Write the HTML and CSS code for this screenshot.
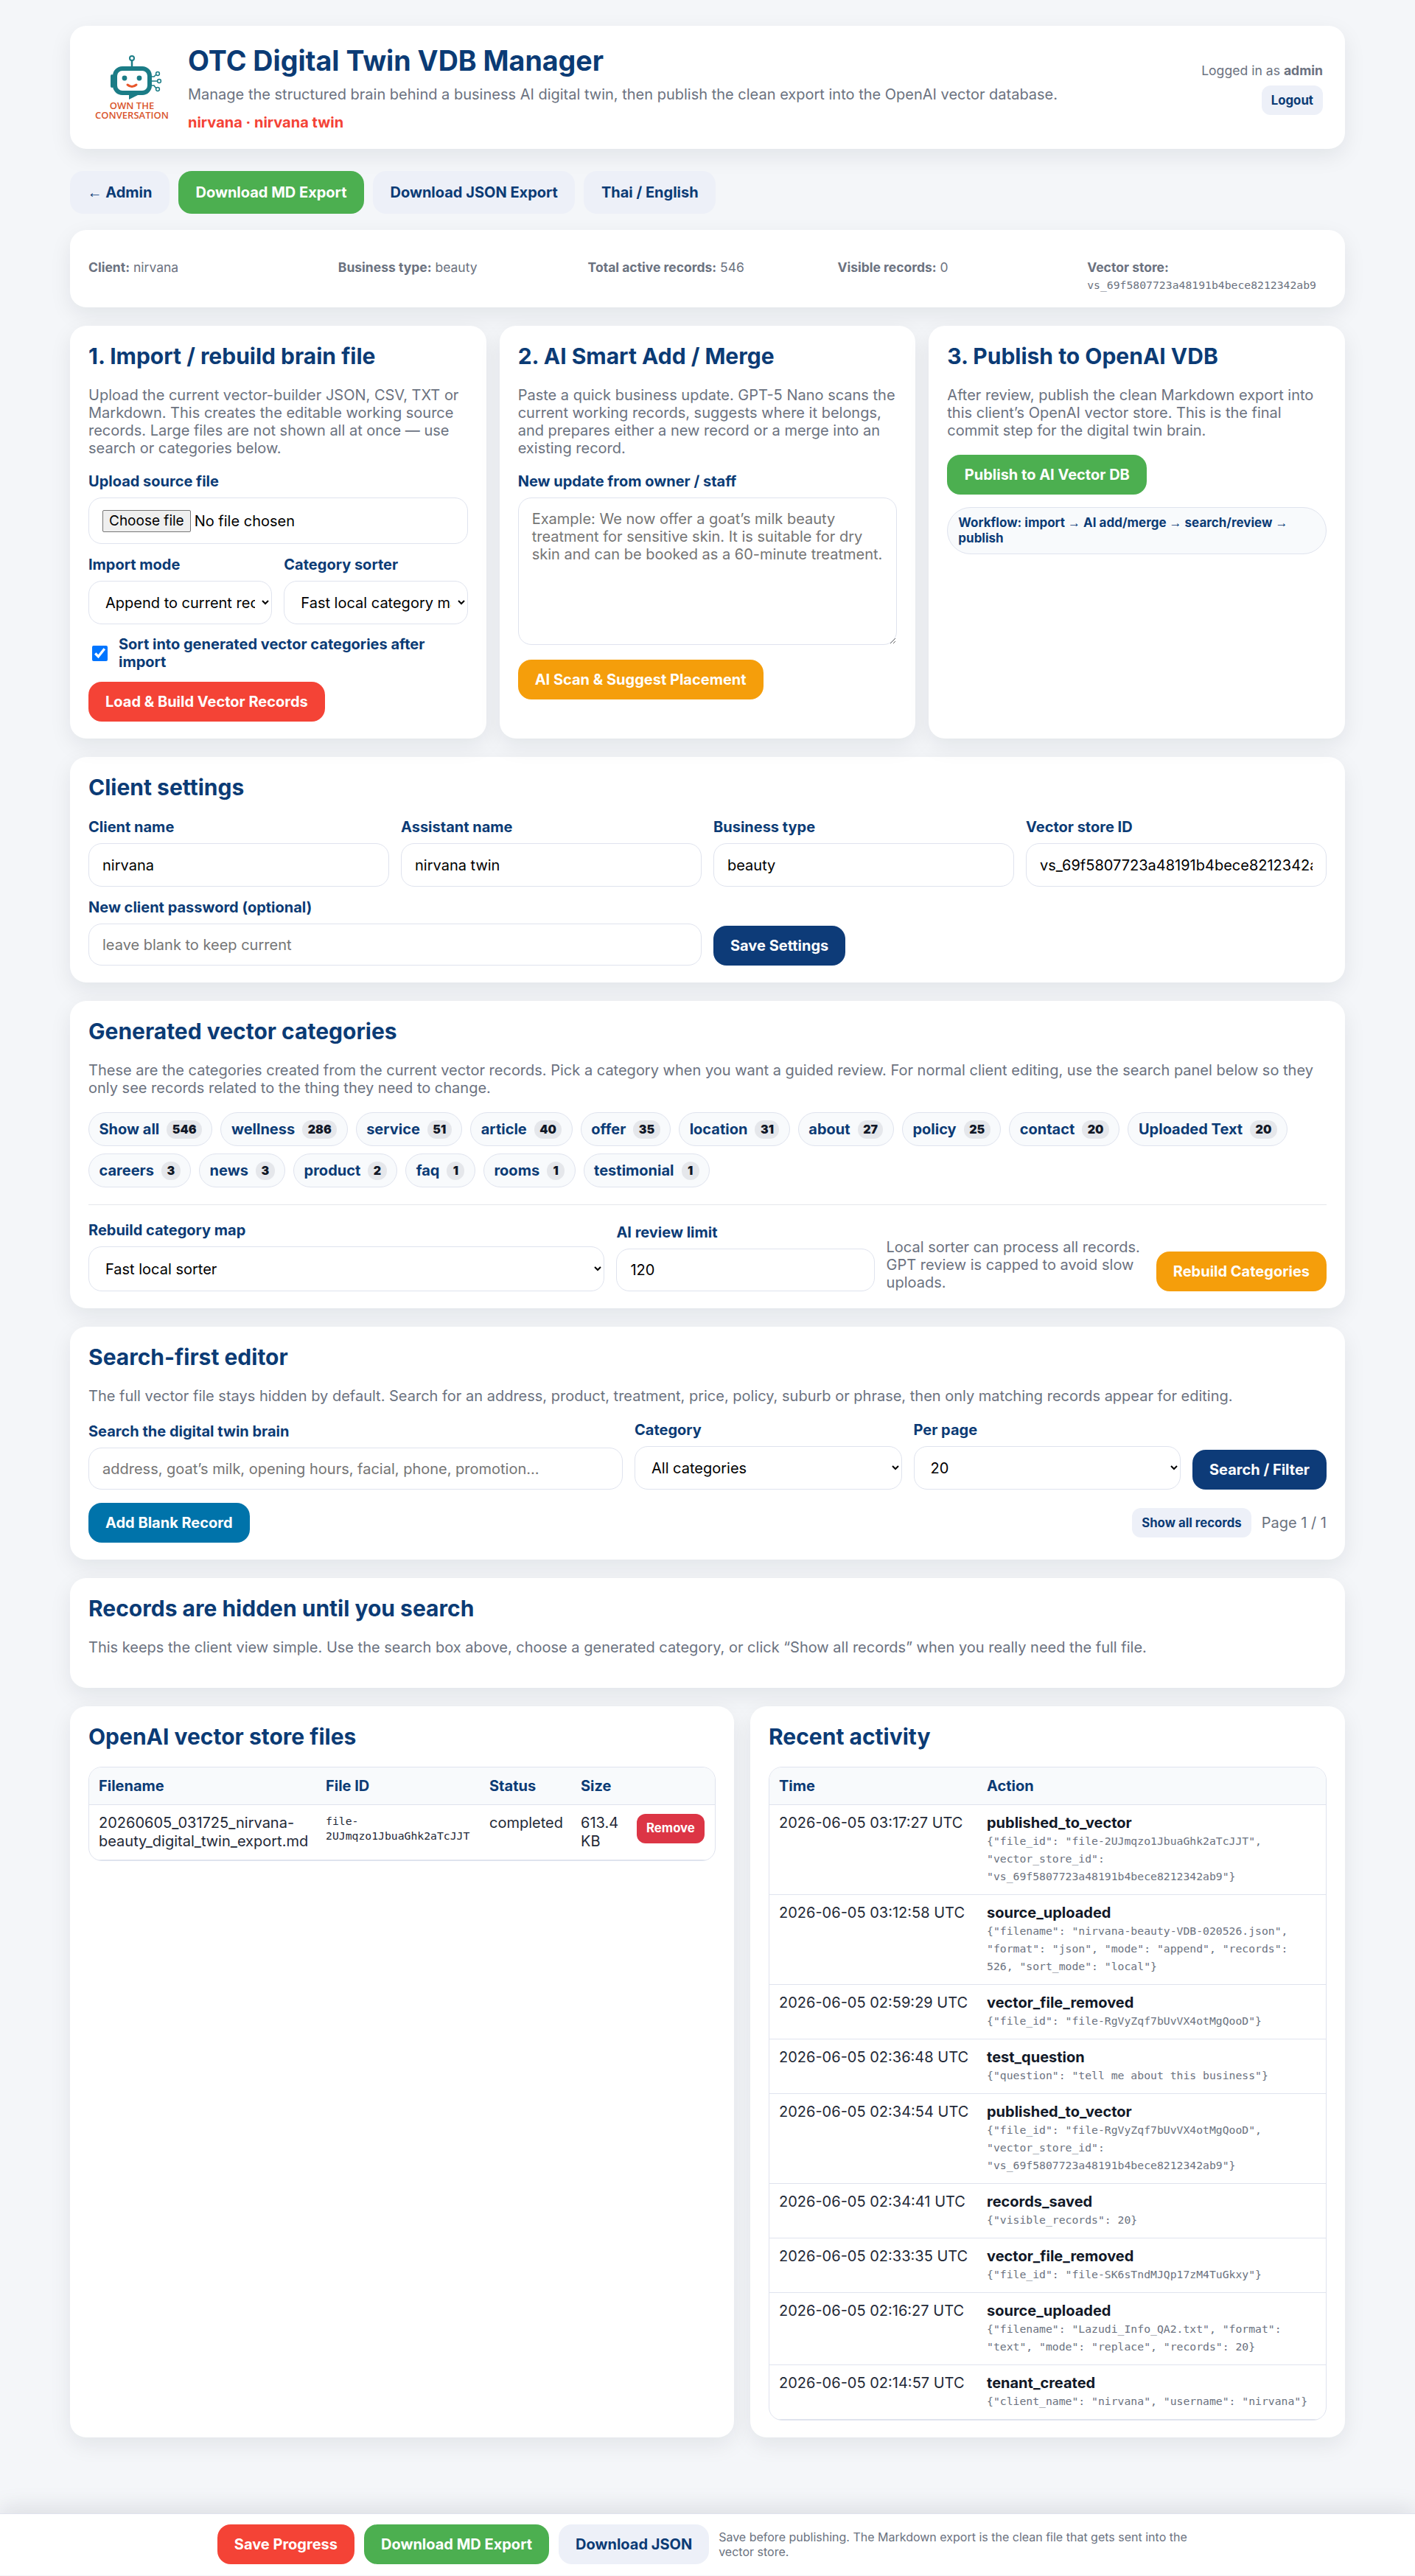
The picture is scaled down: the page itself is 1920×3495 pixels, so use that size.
FILE: index.html
```html
<!DOCTYPE html>
<html lang="en">
<head>
  <meta charset="UTF-8">
  <title>OTC Digital Twin VDB Manager</title>
  <link rel="stylesheet" href="styles.css">
</head>
<body>
  <main class="wrap">
    <header class="card hero">
      <svg class="logo" viewBox="0 0 110 107" aria-label="Own the Conversation">
        <circle cx="54" cy="13" r="3" fill="none" stroke="#1b7c86" stroke-width="2"/>
        <path d="M54 16v9" stroke="#1b7c86" stroke-width="2.5"/>
        <rect x="31" y="27" width="47" height="33" rx="10" fill="#fff" stroke="#1b7c86" stroke-width="6"/>
        <rect x="25" y="35" width="4" height="18" rx="2" fill="#1b7c86"/>
        <circle cx="44" cy="40" r="3.4" fill="#1b7c86"/>
        <circle cx="64" cy="40" r="3.4" fill="#1b7c86"/>
        <path d="M48 49q6 5 12 0" fill="none" stroke="#e8562a" stroke-width="3" stroke-linecap="round"/>
        <path d="M50 62h14l-14 7z" fill="#1b7c86"/>
        <path d="M81 38h3l3-3M81 44h8M81 50h3l3 4" fill="none" stroke="#1b7c86" stroke-width="1.600"/>
        <circle cx="89" cy="34" r="2.400" fill="#fff" stroke="#1b7c86" stroke-width="1.500"/>
        <circle cx="91" cy="44" r="2.400" fill="#fff" stroke="#1b7c86" stroke-width="1.500"/>
        <circle cx="89" cy="55" r="2.400" fill="#fff" stroke="#1b7c86" stroke-width="1.500"/>
        <text class="logo-text" x="54" y="82">OWN THE</text>
        <text class="logo-text" x="54" y="95">CONVERSATION</text>
      </svg>
      <div class="hero-text">
        <h1>OTC Digital Twin VDB Manager</h1>
        <p class="muted hero-sub">Manage the structured brain behind a business AI digital twin, then publish the clean export into the OpenAI vector database.</p>
        <div class="hero-client">nirvana · nirvana twin</div>
      </div>
      <div class="hero-user">
        <div class="muted">Logged in as <strong>admin</strong></div>
        <a class="btn btn-light btn-small">Logout</a>
      </div>
    </header>

    <nav class="toolbar">
      <a class="btn btn-light btn-tall"><span class="arrow">←</span>&nbsp;Admin</a>
      <a class="btn btn-green btn-tall">Download MD Export</a>
      <a class="btn btn-light btn-tall">Download JSON Export</a>
      <a class="btn btn-light btn-tall">Thai / English</a>
    </nav>

    <section class="card stats">
      <div><strong>Client:</strong> nirvana</div>
      <div><strong>Business type:</strong> beauty</div>
      <div><strong>Total active records:</strong> 546</div>
      <div><strong>Visible records:</strong> 0</div>
      <div><strong>Vector store:</strong><br><code>vs_69f5807723a48191b4bece8212342ab9</code></div>
    </section>

    <div class="steps">
      <section class="card">
        <h2>1. Import / rebuild brain file</h2>
        <p class="muted">Upload the current vector-builder JSON, CSV, TXT or Markdown. This creates the editable working source records. Large files are not shown all at once — use search or categories below.</p>
        <span class="label">Upload source file</span>
        <div class="control file-control">
          <button class="file-btn" type="button">Choose file</button>
          <span>No file chosen</span>
        </div>
        <div class="two-col">
          <div>
            <label class="label" for="importMode">Import mode</label>
            <select class="control" id="importMode">
              <option>Append to current records</option>
              <option>Replace current records</option>
            </select>
          </div>
          <div>
            <label class="label" for="sorter">Category sorter</label>
            <select class="control" id="sorter">
              <option>Fast local category map</option>
              <option>GPT review</option>
            </select>
          </div>
        </div>
        <label class="check-row">
          <input type="checkbox" checked>
          <span>Sort into generated vector categories after import</span>
        </label>
        <a class="btn btn-red">Load &amp; Build Vector Records</a>
      </section>

      <section class="card">
        <h2>2. AI Smart Add / Merge</h2>
        <p class="muted">Paste a quick business update. GPT-5 Nano scans the current working records, suggests where it belongs, and prepares either a new record or a merge into an existing record.</p>
        <label class="label" for="ownerUpdate">New update from owner / staff</label>
        <textarea class="control update-box" id="ownerUpdate" placeholder="Example: We now offer a goat’s milk beauty treatment for sensitive skin. It is suitable for dry skin and can be booked as a 60-minute treatment."></textarea>
        <a class="btn btn-orange">AI Scan &amp; Suggest Placement</a>
      </section>

      <section class="card">
        <h2>3. Publish to OpenAI VDB</h2>
        <p class="muted">After review, publish the clean Markdown export into this client’s OpenAI vector store. This is the final commit step for the digital twin brain.</p>
        <a class="btn btn-green publish-btn">Publish to AI Vector DB</a>
        <div class="workflow">Workflow: import <span class="arrow">→</span> AI add/merge <span class="arrow">→</span> search/review <span class="arrow">→</span> publish</div>
      </section>
    </div>

    <section class="card">
      <h2 class="title-tight">Client settings</h2>
      <div class="settings-grid">
        <div>
          <label class="label" for="clientName">Client name</label>
          <input class="control" id="clientName" value="nirvana">
        </div>
        <div>
          <label class="label" for="assistantName">Assistant name</label>
          <input class="control" id="assistantName" value="nirvana twin">
        </div>
        <div>
          <label class="label" for="businessType">Business type</label>
          <input class="control" id="businessType" value="beauty">
        </div>
        <div>
          <label class="label" for="vectorId">Vector store ID</label>
          <input class="control" id="vectorId" value="vs_69f5807723a48191b4bece8212342ab9">
        </div>
        <div class="span-two">
          <label class="label" for="newPassword">New client password (optional)</label>
          <input class="control control-short" type="password" id="newPassword" placeholder="leave blank to keep current">
        </div>
        <a class="btn btn-navy settings-save">Save Settings</a>
      </div>
    </section>

    <section class="card">
      <h2>Generated vector categories</h2>
      <p class="muted">These are the categories created from the current vector records. Pick a category when you want a guided review. For normal client editing, use the search panel below so they only see records related to the thing they need to change.</p>
      <div class="chips">
        <a class="chip">Show all <b>546</b></a>
        <a class="chip">wellness <b>286</b></a>
        <a class="chip">service <b>51</b></a>
        <a class="chip">article <b>40</b></a>
        <a class="chip">offer <b>35</b></a>
        <a class="chip">location <b>31</b></a>
        <a class="chip">about <b>27</b></a>
        <a class="chip">policy <b>25</b></a>
        <a class="chip">contact <b>20</b></a>
        <a class="chip">Uploaded Text <b>20</b></a>
        <a class="chip">careers <b>3</b></a>
        <a class="chip">news <b>3</b></a>
        <a class="chip">product <b>2</b></a>
        <a class="chip">faq <b>1</b></a>
        <a class="chip">rooms <b>1</b></a>
        <a class="chip">testimonial <b>1</b></a>
      </div>
      <div class="rebuild-grid">
        <div>
          <label class="label" for="rebuildMap">Rebuild category map</label>
          <select class="control control-tall" id="rebuildMap">
            <option>Fast local sorter</option>
          </select>
        </div>
        <div>
          <label class="label" for="reviewLimit">AI review limit</label>
          <input class="control control-mid" id="reviewLimit" value="120">
        </div>
        <p class="muted rebuild-note">Local sorter can process all records. GPT review is capped to avoid slow uploads.</p>
        <a class="btn btn-orange">Rebuild Categories</a>
      </div>
    </section>

    <section class="card">
      <h2>Search-first editor</h2>
      <p class="muted">The full vector file stays hidden by default. Search for an address, product, treatment, price, policy, suburb or phrase, then only matching records appear for editing.</p>
      <div class="search-grid">
        <div>
          <label class="label" for="searchBox">Search the digital twin brain</label>
          <input class="control control-short" id="searchBox" placeholder="address, goat’s milk, opening hours, facial, phone, promotion...">
        </div>
        <div>
          <label class="label" for="categoryFilter">Category</label>
          <select class="control" id="categoryFilter">
            <option>All categories</option>
          </select>
        </div>
        <div>
          <label class="label" for="perPage">Per page</label>
          <select class="control" id="perPage">
            <option>20</option>
          </select>
        </div>
        <a class="btn btn-navy">Search / Filter</a>
      </div>
      <div class="search-actions">
        <a class="btn btn-blue">Add Blank Record</a>
        <div class="pager">
          <a class="btn btn-light btn-small">Show all records</a>
          <span class="muted">Page 1 / 1</span>
        </div>
      </div>
    </section>

    <section class="card">
      <h2>Records are hidden until you search</h2>
      <p class="muted hidden-note">This keeps the client view simple. Use the search box above, choose a generated category, or click “Show all records” when you really need the full file.</p>
    </section>

    <div class="bottom-grid">
      <section class="card">
        <h2 class="title-table">OpenAI vector store files</h2>
        <div class="table-box">
          <table class="files-table">
            <thead>
              <tr><th>Filename</th><th>File ID</th><th>Status</th><th>Size</th><th></th></tr>
            </thead>
            <tbody>
              <tr>
                <td>20260605_031725_nirvana-beauty_digital_twin_export.md</td>
                <td><code>file-2UJmqzo1JbuaGhk2aTcJJT</code></td>
                <td>completed</td>
                <td>613.4 KB</td>
                <td><a class="btn btn-danger btn-small">Remove</a></td>
              </tr>
            </tbody>
          </table>
        </div>
      </section>

      <section class="card">
        <h2 class="title-table">Recent activity</h2>
        <div class="table-box">
          <table class="activity-table">
            <thead>
              <tr><th>Time</th><th>Action</th></tr>
            </thead>
            <tbody>
              <tr><td>2026-06-05 03:17:27 UTC</td><td><strong>published_to_vector</strong><code>{"file_id": "file-2UJmqzo1JbuaGhk2aTcJJT", "vector_store_id": "vs_69f5807723a48191b4bece8212342ab9"}</code></td></tr>
              <tr><td>2026-06-05 03:12:58 UTC</td><td><strong>source_uploaded</strong><code>{"filename": "nirvana-beauty-VDB-020526.json", "format": "json", "mode": "append", "records": 526, "sort_mode": "local"}</code></td></tr>
              <tr><td>2026-06-05 02:59:29 UTC</td><td><strong>vector_file_removed</strong><code>{"file_id": "file-RgVyZqf7bUvVX4otMgQooD"}</code></td></tr>
              <tr><td>2026-06-05 02:36:48 UTC</td><td><strong>test_question</strong><code>{"question": "tell me about this business"}</code></td></tr>
              <tr><td>2026-06-05 02:34:54 UTC</td><td><strong>published_to_vector</strong><code>{"file_id": "file-RgVyZqf7bUvVX4otMgQooD", "vector_store_id": "vs_69f5807723a48191b4bece8212342ab9"}</code></td></tr>
              <tr><td>2026-06-05 02:34:41 UTC</td><td><strong>records_saved</strong><code>{"visible_records": 20}</code></td></tr>
              <tr><td>2026-06-05 02:33:35 UTC</td><td><strong>vector_file_removed</strong><code>{"file_id": "file-SK6sTndMJQp17zM4TuGkxy"}</code></td></tr>
              <tr><td>2026-06-05 02:16:27 UTC</td><td><strong>source_uploaded</strong><code>{"filename": "Lazudi_Info_QA2.txt", "format": "text", "mode": "replace", "records": 20}</code></td></tr>
              <tr><td>2026-06-05 02:14:57 UTC</td><td><strong>tenant_created</strong><code>{"client_name": "nirvana", "username": "nirvana"}</code></td></tr>
            </tbody>
          </table>
        </div>
      </section>
    </div>
  </main>

  <footer class="save-bar">
    <a class="btn btn-red">Save Progress</a>
    <a class="btn btn-green">Download MD Export</a>
    <a class="btn btn-light">Download JSON</a>
    <span class="muted save-note">Save before publishing. The Markdown export is the clean file that gets sent into the vector store.</span>
  </footer>
</body>
</html>
```

FILE: styles.css
```css
* {
  box-sizing: border-box;
}
body {
  margin: 0;
  background: #f4f6f9;
  color: #111827;
  font-family: Inter, "Noto Sans", sans-serif;
  font-size: 20px;
  line-height: 24px;
}
.wrap {
  width: 1730px;
  margin: 0 auto;
  padding: 35px 0 78px;
}
.card {
  background: white;
  border-radius: 22px;
  padding: 24px 25px 23px;
  margin-bottom: 25px;
  box-shadow: 0 10px 30px rgba(15, 23, 42, 0.08);
}
h1, h2 {
  margin: 0;
  color: #0b3b75;
  font-weight: 700;
}
h1 {
  font-size: 37.6px;
  line-height: 44px;
  margin-bottom: 11px;
}
h2 {
  font-size: 30px;
  line-height: 34px;
  margin-bottom: 24px;
}
.title-tight {
  margin-bottom: 25px;
}
p {
  margin: 0;
}
.muted {
  color: #6b7280;
}
code {
  font-family: "DejaVu Sans Mono", monospace;
  font-size: 14.75px;
}
.arrow {
  font-family: "Liberation Sans", sans-serif;
  font-weight: 400;
}

/* header */
.hero {
  display: flex;
  align-items: center;
  gap: 20px;
  height: 167px;
  padding: 2px 30px 0;
}
.logo {
  width: 110px;
  height: 107px;
  flex: none;
}
.logo-text {
  font-family: "Open Sans", sans-serif;
  font-size: 13px;
  font-weight: 600;
  fill: #d9552c;
  text-anchor: middle;
}
.hero-text {
  flex: 1;
}
.hero-sub {
  margin-bottom: 14px;
}
.hero-client {
  color: #f44336;
  font-weight: 700;
}
.hero-user {
  display: flex;
  flex-direction: column;
  align-items: flex-end;
  gap: 8px;
  font-size: 17.6px;
}

/* buttons */
.btn {
  display: inline-flex;
  align-items: center;
  justify-content: center;
  height: 54px;
  padding: 0 23px;
  border-radius: 18px;
  font-size: 20px;
  font-weight: 700;
  white-space: nowrap;
  color: white;
  cursor: pointer;
}
.btn-tall {
  height: 58px;
  padding: 0 23.5px;
}
.btn-small {
  height: 40px;
  padding: 0 13px;
  border-radius: 12px;
  font-size: 16.8px;
}
.btn-light {
  background: #edf0f8;
  color: #0b3b75;
}
.btn-green {
  background: #4caf50;
}
.btn-red {
  background: #f44336;
}
.btn-orange {
  background: #f59e0b;
}
.btn-navy {
  background: #0d3b78;
}
.btn-blue {
  background: #0073aa;
}
.btn-danger {
  background: #dc3545;
  color: white;
}
.toolbar {
  display: flex;
  gap: 12px;
  margin-bottom: 22px;
  padding-top: 5px;
}

/* stats */
.stats {
  display: grid;
  grid-template-columns: repeat(5, 1fr);
  gap: 14px;
  padding: 39px 25px 19px;
  font-size: 17.5px;
  line-height: 23px;
  color: #6b7280;
}

/* forms */
.label {
  display: block;
  margin-bottom: 10px;
  color: #0b3b75;
  font-weight: 700;
}
.control {
  display: block;
  width: 100%;
  height: 59px;
  padding: 0 18px;
  border: 1px solid #dfe3ee;
  border-radius: 18px;
  background: white;
  font-family: inherit;
  font-size: 20px;
  color: black;
}
select.control {
  padding-right: 6px;
}
.control-short {
  height: 57px;
}
.control-mid {
  height: 58px;
}
.control-tall {
  height: 61px;
}
.file-control {
  display: flex;
  align-items: center;
  gap: 5px;
  height: 63px;
  margin-bottom: 16px;
}
.file-btn {
  height: 30px;
  padding: 0 8px;
  border: 1px solid #767676;
  border-radius: 2px;
  background: #efefef;
  font-family: inherit;
  font-size: 19px;
  color: black;
}
.update-box {
  height: 200px;
  padding: 16px 18px;
  line-height: 24px;
  margin-bottom: 20px;
}
.two-col {
  display: grid;
  grid-template-columns: 1fr 1fr;
  gap: 16px;
}
.check-row {
  display: flex;
  align-items: center;
  gap: 15px;
  margin: 15px 0;
  padding-left: 5px;
  color: #0b3b75;
  font-weight: 700;
}
.check-row input {
  flex: none;
  width: 21px;
  height: 21px;
  margin: 0;
}
.steps {
  display: grid;
  grid-template-columns: repeat(3, 1fr);
  gap: 18px;
}
.steps p {
  margin-bottom: 21px;
}
.publish-btn {
  display: flex;
  width: 271px;
  margin-bottom: 17px;
}
.workflow {
  padding: 10px 14px;
  border: 1px solid #dfe3ee;
  border-radius: 32px;
  background: #f8fafc;
  color: #0b3b75;
  font-size: 17px;
  font-weight: 700;
  line-height: 21px;
}

/* settings */
.settings-grid {
  display: grid;
  grid-template-columns: repeat(4, 1fr);
  gap: 16px;
  align-items: end;
}
.span-two {
  grid-column: span 2;
}
.settings-save {
  justify-self: start;
}

/* categories */
.chips {
  display: flex;
  flex-wrap: wrap;
  gap: 10px 11px;
  margin-top: 21px;
  padding-bottom: 23px;
  border-bottom: 1px solid #e5e7eb;
  margin-bottom: 22px;
}
.chip {
  display: inline-flex;
  align-items: center;
  gap: 10px;
  height: 46px;
  padding: 0 13.5px;
  border: 1px solid #dfe3ee;
  border-radius: 999px;
  background: #f8fafc;
  color: #0b3b75;
  font-weight: 700;
}
.chip b {
  min-width: 24px;
  height: 25px;
  padding: 0 7.5px;
  border-radius: 12px;
  background: #e5e7eb;
  color: #111827;
  font-size: 16px;
  line-height: 25px;
  text-align: center;
}
.rebuild-grid {
  display: grid;
  grid-template-columns: 2fr 1fr 1fr auto;
  gap: 16px;
  align-items: end;
}
.search-grid {
  display: grid;
  grid-template-columns: 2fr 1fr 1fr auto;
  gap: 16px;
  align-items: end;
  margin-top: 22px;
}
.search-actions {
  display: flex;
  justify-content: space-between;
  align-items: center;
  margin-top: 18px;
}
.pager {
  display: flex;
  align-items: center;
  gap: 14px;
}
.hidden-note {
  margin-bottom: 20px;
}

/* tables */
.bottom-grid {
  display: grid;
  grid-template-columns: 901px 1fr;
  gap: 22px;
}
.table-box {
  border: 1px solid #dfe3ee;
  border-radius: 18px;
  overflow: hidden;
}
table {
  width: 100%;
  border-collapse: collapse;
  table-layout: fixed;
}
th, td {
  padding: 12px 13px;
  border-bottom: 1px solid #dfe3ee;
  text-align: left;
  vertical-align: top;
}
th {
  height: 50px;
  background: #f8fafc;
  color: #0b3b75;
  font-weight: 700;
  vertical-align: middle;
}
td {
  color: #1f2937;
  line-height: 25px;
}
.files-table th:nth-child(1) { width: 308px; }
.files-table th:nth-child(2) { width: 222px; }
.files-table th:nth-child(3) { width: 124px; }
.files-table th:nth-child(4) { width: 76px; }
.files-table code {
  display: block;
  line-height: 20px;
}
.activity-table th:nth-child(1) { width: 282px; }
.activity-table td:first-child {
  white-space: nowrap;
}
.activity-table strong {
  display: block;
  color: #111827;
}
.activity-table code {
  display: block;
  line-height: 24px;
  color: #6b7280;
}

/* sticky save bar */
.save-bar {
  display: flex;
  justify-content: center;
  align-items: center;
  gap: 13px;
  height: 84px;
  background: white;
  border-top: 1px solid #dfe3ee;
  box-shadow: 0 -8px 30px rgba(15, 23, 42, 0.1);
}
.save-note {
  width: 650px;
  font-size: 16px;
  line-height: 20px;
}
```
